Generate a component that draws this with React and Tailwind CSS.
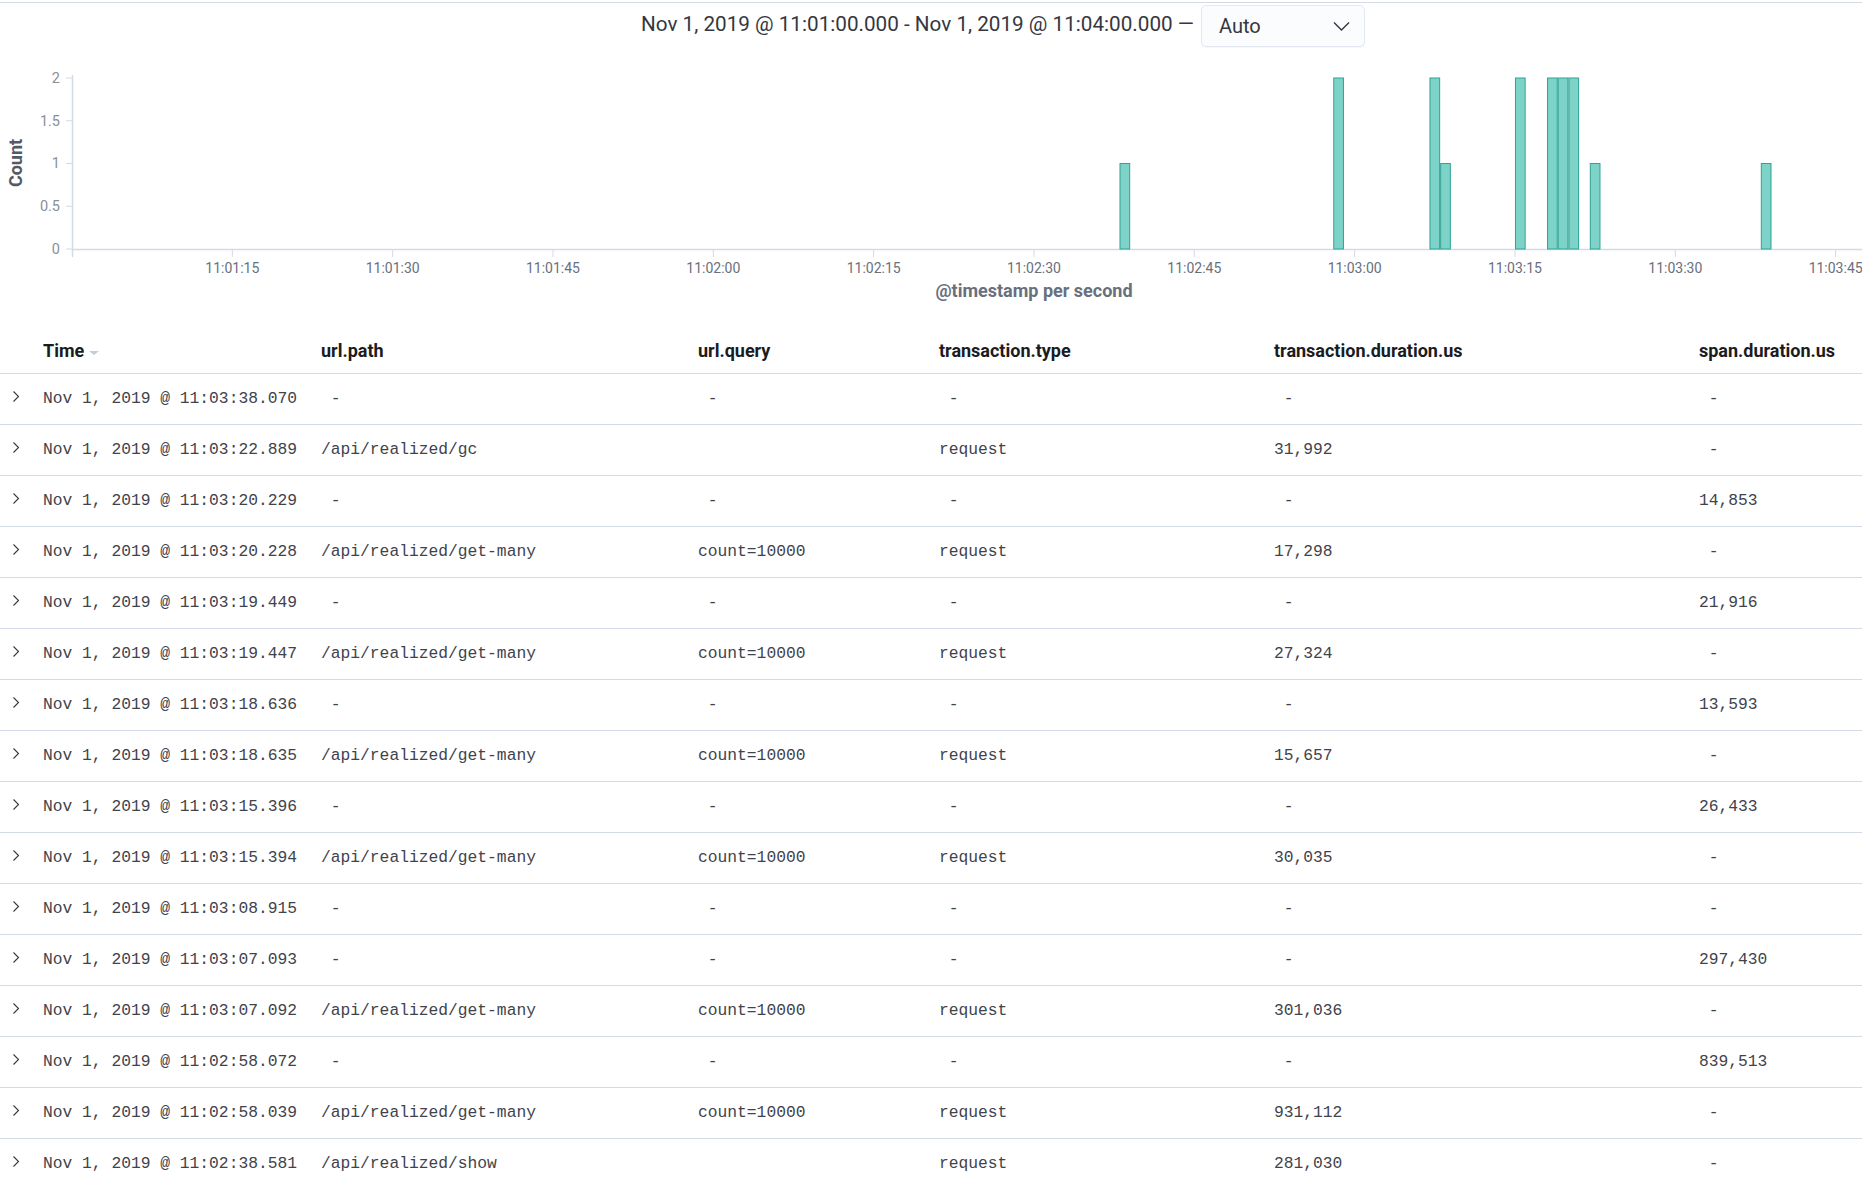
import React from "react";

const X0 = 72;
const PX = 160.33 / 15;
const BASE = 199;
const UNIT = 85.5;

const bars = [
  { s: 98, v: 1 },
  { s: 118, v: 2 },
  { s: 127, v: 2 },
  { s: 128, v: 1 },
  { s: 135, v: 2 },
  { s: 138, v: 2 },
  { s: 139, v: 2 },
  { s: 140, v: 2 },
  { s: 142, v: 1 },
  { s: 158, v: 1 },
];

const xTicks = [
  "11:01:15", "11:01:30", "11:01:45", "11:02:00", "11:02:15", "11:02:30",
  "11:02:45", "11:03:00", "11:03:15", "11:03:30", "11:03:45",
];

const yTicks = [["2", 2], ["1.5", 1.5], ["1", 1], ["0.5", 0.5], ["0", 0]];

const D = "\u00a0-";
const rows = [
  ["Nov 1, 2019 @ 11:03:38.070", D, D, D, D, D],
  ["Nov 1, 2019 @ 11:03:22.889", "/api/realized/gc", "", "request", "31,992", D],
  ["Nov 1, 2019 @ 11:03:20.229", D, D, D, D, "14,853"],
  ["Nov 1, 2019 @ 11:03:20.228", "/api/realized/get-many", "count=10000", "request", "17,298", D],
  ["Nov 1, 2019 @ 11:03:19.449", D, D, D, D, "21,916"],
  ["Nov 1, 2019 @ 11:03:19.447", "/api/realized/get-many", "count=10000", "request", "27,324", D],
  ["Nov 1, 2019 @ 11:03:18.636", D, D, D, D, "13,593"],
  ["Nov 1, 2019 @ 11:03:18.635", "/api/realized/get-many", "count=10000", "request", "15,657", D],
  ["Nov 1, 2019 @ 11:03:15.396", D, D, D, D, "26,433"],
  ["Nov 1, 2019 @ 11:03:15.394", "/api/realized/get-many", "count=10000", "request", "30,035", D],
  ["Nov 1, 2019 @ 11:03:08.915", D, D, D, D, D],
  ["Nov 1, 2019 @ 11:03:07.093", D, D, D, D, "297,430"],
  ["Nov 1, 2019 @ 11:03:07.092", "/api/realized/get-many", "count=10000", "request", "301,036", D],
  ["Nov 1, 2019 @ 11:02:58.072", D, D, D, D, "839,513"],
  ["Nov 1, 2019 @ 11:02:58.039", "/api/realized/get-many", "count=10000", "request", "931,112", D],
  ["Nov 1, 2019 @ 11:02:38.581", "/api/realized/show", "", "request", "281,030", D],
];

const cols = "grid grid-cols-[43px_278px_377px_241px_335px_425px_1fr]";

function Histogram() {
  return (
    <svg className="block" width="1862" height="276" viewBox="0 0 1862 276" style={{ fontFamily: "Roboto, 'Liberation Sans', sans-serif" }}>
      {/* axes */}
      <line x1="72.5" y1="25" x2="72.5" y2="207" stroke="#d3dae6" strokeWidth="1.5" />
      <line x1="72" y1="199.5" x2="1862" y2="199.5" stroke="#d3dae6" strokeWidth="1.5" />
      {yTicks.map(([label, v]) => {
        const y = BASE - v * UNIT;
        return (
          <g key={label}>
            <line x1="66" y1={y} x2="72" y2={y} stroke="#d3dae6" />
            <text x="60" y={y + 1} textAnchor="end" dominantBaseline="middle" fontSize="14.5" fill="#8a8f99">
              {label}
            </text>
          </g>
        );
      })}
      <text
        x="17"
        y="113"
        transform="rotate(-90 17 113)"
        textAnchor="middle"
        dominantBaseline="middle"
        fontSize="18"
        fontWeight="700"
        fill="#535966"
      >
        Count
      </text>

      {xTicks.map((t, i) => {
        const x = X0 + (i + 1) * 160.33;
        return (
          <g key={t}>
            <line x1={x} y1="199" x2={x} y2="207" stroke="#d3dae6" />
            <text x={x} y="219" textAnchor="middle" dominantBaseline="middle" fontSize="14" fill="#69707d">
              {t}
            </text>
          </g>
        );
      })}
      <text x="1034" y="242" textAnchor="middle" dominantBaseline="middle" fontSize="18" fontWeight="700" fill="#69707d">
        @timestamp per second
      </text>

      {bars.map((b) => (
        <rect
          key={b.s}
          x={X0 + b.s * PX + 0.5}
          y={BASE - b.v * UNIT}
          width={PX - 1}
          height={b.v * UNIT}
          fill="#7dd3c8"
          stroke="#2fa394"
          strokeWidth="1"
        />
      ))}
    </svg>
  );
}

function Chevron() {
  return (
    <svg width="8" height="13" viewBox="0 0 8 13" className="text-[#343741]">
      <path d="M1.5 1.5 6.5 6.5l-5 5" fill="none" stroke="currentColor" strokeWidth="1.1" />
    </svg>
  );
}

export default function App() {
  return (
    <div className="h-[1188px] overflow-hidden bg-white" style={{ fontFamily: "Roboto, 'Liberation Sans', sans-serif" }}>
      <div className="mt-[2px] border-t border-[#d3dae6]">
        <div className="flex h-[47px] items-start justify-center pl-[144px]">
          <div className="mt-[7px] text-[20.7px] leading-[28px] text-[#343741] whitespace-nowrap">
            Nov 1, 2019 @ 11:01:00.000 - Nov 1, 2019 @ 11:04:00.000 —
          </div>
          <div className="ml-[7px] mt-[2px] flex h-[42px] w-[164px] items-center justify-between rounded-[5px] border border-[#e3e8f0] bg-[#fbfcfd] pl-[17px] pr-[14px] shadow-[0_1px_1px_rgba(0,0,0,0.03)]">
            <span className="text-[20px] text-[#343741]">Auto</span>
            <svg width="17" height="10" viewBox="0 0 17 10">
              <path d="M1 1.5l7.5 7.5 7.5-7.5" fill="none" stroke="#343741" strokeWidth="1.4" />
            </svg>
          </div>
        </div>
      </div>

      <Histogram />

      <div className={`${cols} h-[48px] items-center border-b border-[#d3dae6] pt-[2px] text-[18px] font-bold text-[#1a1c21]`}>
        <div />
        <div className="flex items-center">
          Time
          <svg width="12" height="6" viewBox="0 0 12 6" className="ml-[4px] mt-[4px]">
            <path d="M1 1h10L6 5z" fill="#c5ccd6" />
          </svg>
        </div>
        <div>url.path</div>
        <div>url.query</div>
        <div>transaction.type</div>
        <div>transaction.duration.us</div>
        <div>span.duration.us</div>
      </div>

      {rows.map((r, i) => (
        <div
          key={i}
          className={`${cols} h-[51px] items-center border-b border-[#d3dae6] text-[16.3px] text-[#3f434c] whitespace-pre`}
          style={{ fontFamily: "'Liberation Mono', 'DejaVu Sans Mono', monospace" }}
        >
          <div className="pl-[12px] pb-[5px]">
            <Chevron />
          </div>
          {r.map((c, j) => (
            <div key={j}>{c}</div>
          ))}
        </div>
      ))}
    </div>
  );
}
